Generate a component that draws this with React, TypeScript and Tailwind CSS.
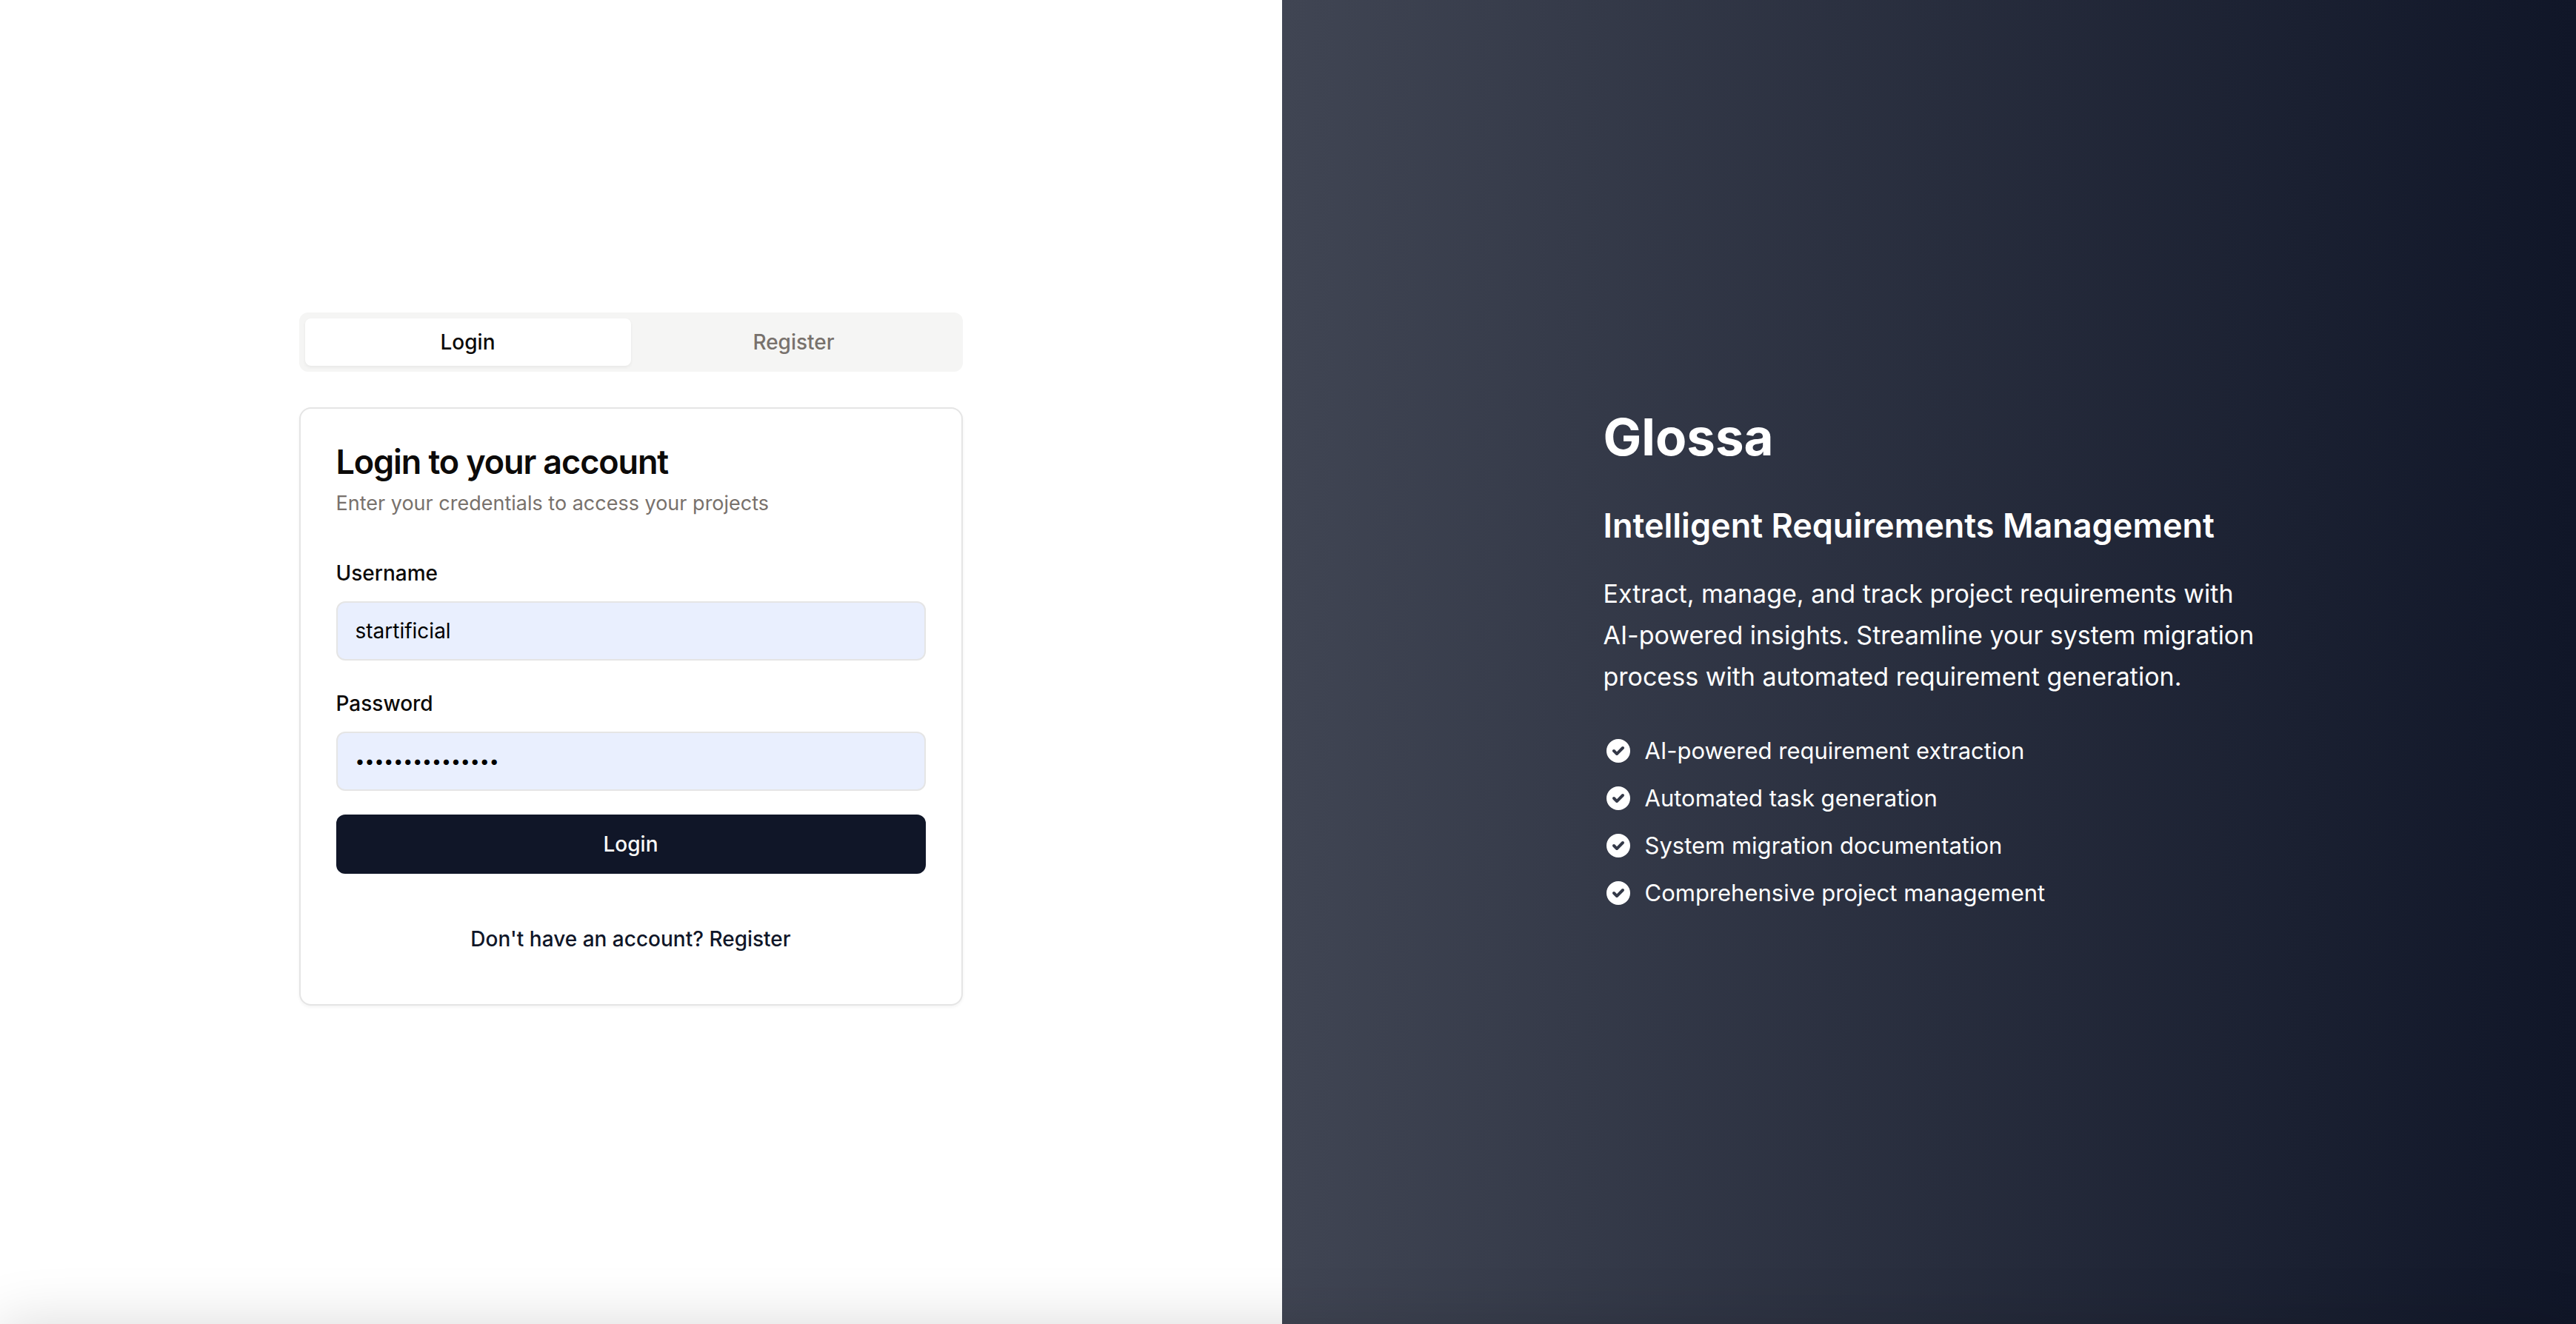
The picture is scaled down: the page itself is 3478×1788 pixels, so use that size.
import { useState, type ReactNode } from "react";

const features = [
  "AI-powered requirement extraction",
  "Automated task generation",
  "System migration documentation",
  "Comprehensive project management",
];

function CheckCircle() {
  return (
    <svg viewBox="0 0 20 20" fill="currentColor" aria-hidden="true" className="size-10 shrink-0">
      <path
        fillRule="evenodd"
        clipRule="evenodd"
        d="M10 18a8 8 0 100-16 8 8 0 000 16zm3.707-9.293a1 1 0 00-1.414-1.414L9 10.586 7.707 9.293a1 1 0 00-1.414 1.414l2 2a1 1 0 001.414 0l4-4z"
      />
    </svg>
  );
}

function Tab({ active, onClick, children }: { active: boolean; onClick: () => void; children: ReactNode }) {
  return (
    <button
      type="button"
      role="tab"
      aria-selected={active}
      onClick={onClick}
      className={
        active
          ? "flex-1 rounded-lg bg-white text-[28px] leading-10 font-medium text-[#0c0a09] shadow-[0_2px_4px_rgba(0,0,0,0.06)]"
          : "flex-1 rounded-lg text-[28px] leading-10 font-medium text-[#78716c]"
      }
    >
      {children}
    </button>
  );
}

function Field({ id, label, type, value }: { id: string; label: string; type: string; value: string }) {
  return (
    <div className="flex flex-col gap-4">
      <label htmlFor={id} className="text-[28px] leading-[52px] h-12 font-medium text-[#0c0a09]">
        {label}
      </label>
      <input
        id={id}
        type={type}
        defaultValue={value}
        className={
          type === "password"
            ? "h-20 w-full rounded-xl border-2 border-[#e5e5e5] bg-[#e9effe] px-6 text-[23px] leading-10 text-black outline-none"
            : "h-20 w-full rounded-xl border-2 border-[#e5e5e5] bg-[#e9effe] px-6 text-[28px] leading-10 text-black outline-none"
        }
      />
    </div>
  );
}

export default function App() {
  const [tab, setTab] = useState("login");

  return (
    <div className="relative flex min-h-screen overflow-hidden bg-white font-['Inter',sans-serif]">
      <main className="flex w-[49.77%] items-center justify-center pr-7 pb-2">
        <div className="flex w-full max-w-4xl flex-col gap-12">
          <div role="tablist" className="flex h-20 rounded-xl bg-[#f5f5f4] p-2">
            <Tab active={tab === "login"} onClick={() => setTab("login")}>
              Login
            </Tab>
            <Tab active={tab === "register"} onClick={() => setTab("register")}>
              Register
            </Tab>
          </div>

          <section className="flex flex-col gap-12 rounded-2xl border-2 border-[#e5e5e5] bg-white p-12 shadow-[0_2px_4px_rgba(0,0,0,0.05)]">
            <header className="flex flex-col gap-3">
              <h1 className="text-[45px] leading-12 font-semibold tracking-tight text-[#0c0a09]">
                Login to your account
              </h1>
              <p className="text-[27px] leading-10 text-[#78716c]">Enter your credentials to access your projects</p>
            </header>
            <form className="flex flex-col gap-8" onSubmit={(e) => e.preventDefault()}>
              <Field id="username" label="Username" type="text" value="startificial" />
              <Field id="password" label="Password" type="password" value="123456789012345" />
              <button
                type="submit"
                className="h-20 w-full rounded-xl bg-[#101628] text-[28px] leading-10 font-medium text-[#fafaf9]"
              >
                Login
              </button>
            </form>
            <button
              type="button"
              onClick={() => setTab("register")}
              className="h-20 self-center text-[28px] leading-10 font-medium text-[#101628]"
            >
              Don't have an account? Register
            </button>
          </section>
        </div>
      </main>

      <aside className="flex flex-1 items-center justify-center bg-[linear-gradient(to_right,#404553,#101628)] pb-2 text-white">
        <div className="w-full max-w-[880px]">
          <h2 className="text-[69px] leading-[80px] font-bold">Glossa</h2>
          <h3 className="mt-12 text-[45px] leading-[64px] font-semibold">Intelligent Requirements Management</h3>
          <p className="mt-8 text-[34px] leading-[56px]">
            Extract, manage, and track project requirements with AI-powered insights. Streamline your system migration
            process with automated requirement generation.
          </p>
          <ul className="mt-12 flex flex-col gap-4">
            {features.map((feature) => (
              <li key={feature} className="flex items-center gap-4 text-[31px] leading-12">
                <CheckCircle />
                {feature}
              </li>
            ))}
          </ul>
        </div>
      </aside>

      <div className="pointer-events-none absolute inset-x-0 top-full h-40 shadow-[0_0_80px_rgba(0,0,0,0.15)]" />
    </div>
  );
}
